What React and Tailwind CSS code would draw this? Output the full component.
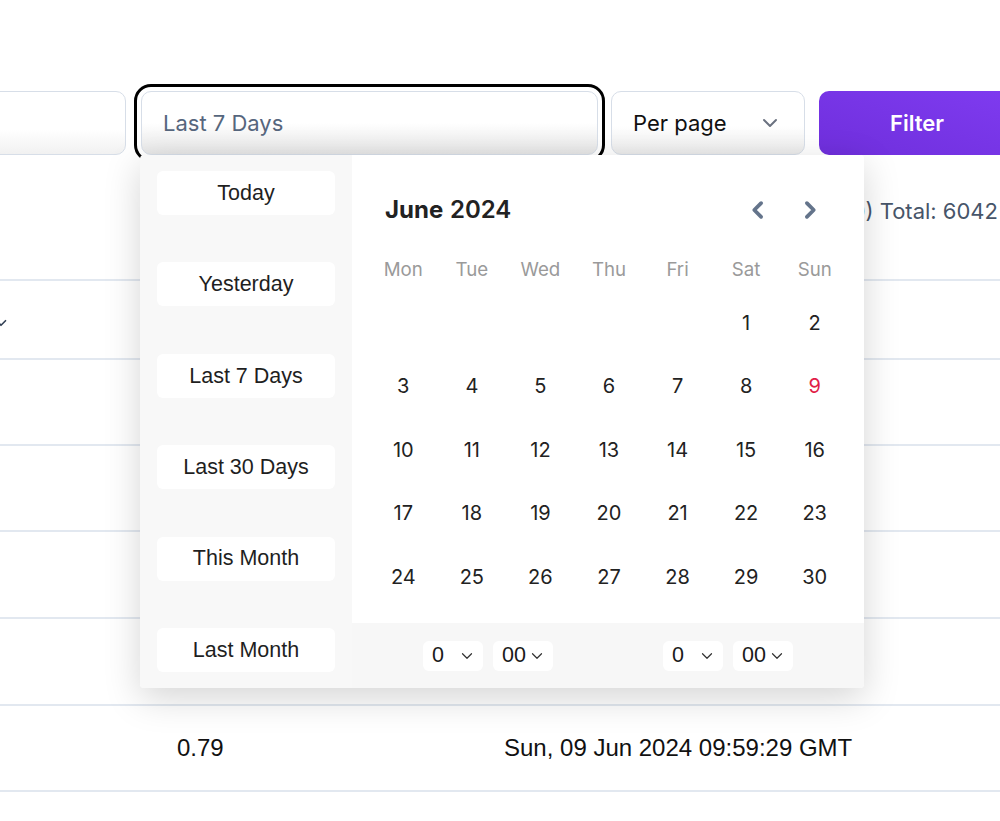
import React from "react";

const inter = { fontFamily: "Inter, 'Noto Sans', sans-serif" };
const arial = { fontFamily: "'Liberation Sans', Arial, sans-serif" };

function ChevronDown({ className = "", strokeWidth = 2 }) {
  return (
    <svg viewBox="0 0 16 10" className={className} fill="none" stroke="currentColor" strokeWidth={strokeWidth} strokeLinecap="round" strokeLinejoin="round">
      <path d="M2 2 L8 8 L14 2" />
    </svg>
  );
}

function NavChevron({ dir }) {
  return (
    <svg viewBox="0 0 16 16" className="w-[20px] h-[20px]" fill="none" stroke="currentColor" strokeWidth="3" strokeLinecap="round" strokeLinejoin="round">
      {dir === "left" ? <path d="M10.5 2.5 L5 8 L10.5 13.5" /> : <path d="M5.5 2.5 L11 8 L5.5 13.5" />}
    </svg>
  );
}

function TimeSelect({ value }) {
  return (
    <div className="w-[60px] h-[30px] bg-white rounded-[6px] flex items-center justify-between pl-[9px] pr-[10px] text-[21.5px] text-[#1a1a1a]" style={arial}>
      <span className="leading-none">{value}</span>
      <ChevronDown className="w-[12px] h-[8px] text-[#333]" strokeWidth={1.6} />
    </div>
  );
}

const presets = ["Today", "Yesterday", "Last 7 Days", "Last 30 Days", "This Month", "Last Month"];
const weekdays = ["Mon", "Tue", "Wed", "Thu", "Fri", "Sat", "Sun"];
const cells = [null, null, null, null, null, ...Array.from({ length: 30 }, (_, i) => i + 1)];

const rows = [
  { a: "", d: "", h: "h-[86px]" },
  { a: "", d: "", h: "h-[86px]" },
  { a: "", d: "", h: "h-[87px]" },
  { a: "", d: "", h: "h-[87px]" },
  { a: "0.79", d: "Sun, 09 Jun 2024 09:59:29 GMT", h: "h-[86px]" },
];

export default function App() {
  return (
    <div className="relative w-[1000px] h-[821px] overflow-hidden bg-white" style={inter}>
      {/* Filter bar */}
      <div className="pt-[91px] flex items-start -ml-[200px]">
        <div className="w-[326px] h-[64px] shrink-0 rounded-[10px] border border-[#d7dee8] bg-linear-to-b from-white from-60% to-[#f1f1f1]" />
        <div className="ml-[15px] w-[457px] h-[64px] shrink-0 rounded-[10px] border border-[#d7dee8] bg-linear-to-b from-white from-50% to-[#e6e6e6] outline-[3px] outline-solid outline-black outline-offset-[4px] flex items-center pl-[21px]">
          <span className="text-[22px] text-[#56667d]">Last 7 Days</span>
        </div>
        <div className="ml-[13px] w-[194px] h-[64px] shrink-0 rounded-[10px] border border-[#d7dee8] bg-linear-to-b from-white from-55% to-[#ebebeb] flex items-center justify-between pl-[21px] pr-[26px]">
          <span className="text-[22px] text-[#111]">Per page</span>
          <ChevronDown className="w-[16px] h-[10px] text-[#6b7280]" strokeWidth={2} />
        </div>
        <div className="ml-[14px] w-[196px] h-[64px] shrink-0 rounded-[10px] bg-linear-to-tr from-[#6f2fdc] to-[#7f3bf0] flex items-center justify-center">
          <span className="text-[22px] font-semibold text-white">Filter</span>
        </div>
      </div>

      {/* Total row */}
      <div className="h-[124px] flex items-center justify-end pr-[2px] pb-[12px]">
        <span className="text-[22px] text-[#475569] whitespace-nowrap">Showing 1 - 10 of 605 pages (10) Total: 6042</span>
      </div>

      {/* Table */}
      <div className="text-[24px] text-[#111]" style={arial}>
        <div className="h-[81px] border-y-2 border-[#e2e8f0] flex items-center -ml-[200px]">
          <div className="w-[205px] shrink-0 flex items-center justify-end pt-[6px]">
            <ChevronDown className="w-[12px] h-[8px] -mr-[2px] text-[#334155]" strokeWidth={2.2} />
          </div>
        </div>
        {rows.map((r, i) => (
          <div key={i} className={`${r.h} border-b-2 border-[#e2e8f0] flex items-center`}>
            <div className="w-[177px] shrink-0" />
            <div className="w-[327px] shrink-0">{r.a}</div>
            <div className="whitespace-nowrap">{r.d}</div>
          </div>
        ))}
      </div>

      {/* Date picker popup */}
      <div className="absolute left-[140px] top-[155px] w-[724px] h-[533px] flex rounded-[4px] overflow-hidden shadow-[0_10px_36px_rgba(0,0,0,0.17)]">
        <div className="w-[212px] shrink-0 bg-[#f8f8f8] flex flex-col justify-between py-[16px] pl-[17px] pr-[17px]">
          {presets.map((p) => (
            <div key={p} className="h-[44px] bg-white rounded-[6px] flex items-center justify-center text-[21.5px] text-[#1f1f1f]" style={arial}>
              {p}
            </div>
          ))}
        </div>
        <div className="flex-1 flex flex-col">
          <div className="h-[468px] bg-white pt-[38px] pl-[17px] pr-[15px]">
            <div className="h-[34px] flex items-center justify-between pl-[16px] pr-[23px]">
              <div className="text-[24px] text-[#222]">
                <span className="font-bold">June</span> <span className="font-semibold">2024</span>
              </div>
              <div className="flex items-center gap-[20px] text-[#64748b]">
                <div className="w-[32px] h-[32px] flex items-center justify-center"><NavChevron dir="left" /></div>
                <div className="w-[32px] h-[32px] flex items-center justify-center"><NavChevron dir="right" /></div>
              </div>
            </div>
            <div className="mt-[25px] h-[36px] grid grid-cols-7 items-center">
              {weekdays.map((w) => (
                <div key={w} className="text-center text-[18.7px] text-[#9a9a9a]">{w}</div>
              ))}
            </div>
            <div className="mt-[3px] grid grid-cols-7 auto-rows-[63.5px]">
              {cells.map((d, i) => (
                <div key={i} className={`flex items-center justify-center text-[20px] ${d === 9 ? "text-[#e11d48]" : "text-[#222]"}`}>
                  {d ?? ""}
                </div>
              ))}
            </div>
          </div>
          <div className="h-[65px] bg-[#f7f7f7] flex items-center pl-[71px]">
            <div className="flex gap-[10px]">
              <TimeSelect value="0" />
              <TimeSelect value="00" />
            </div>
            <div className="flex gap-[10px] ml-[110px]">
              <TimeSelect value="0" />
              <TimeSelect value="00" />
            </div>
          </div>
        </div>
      </div>
    </div>
  );
}
